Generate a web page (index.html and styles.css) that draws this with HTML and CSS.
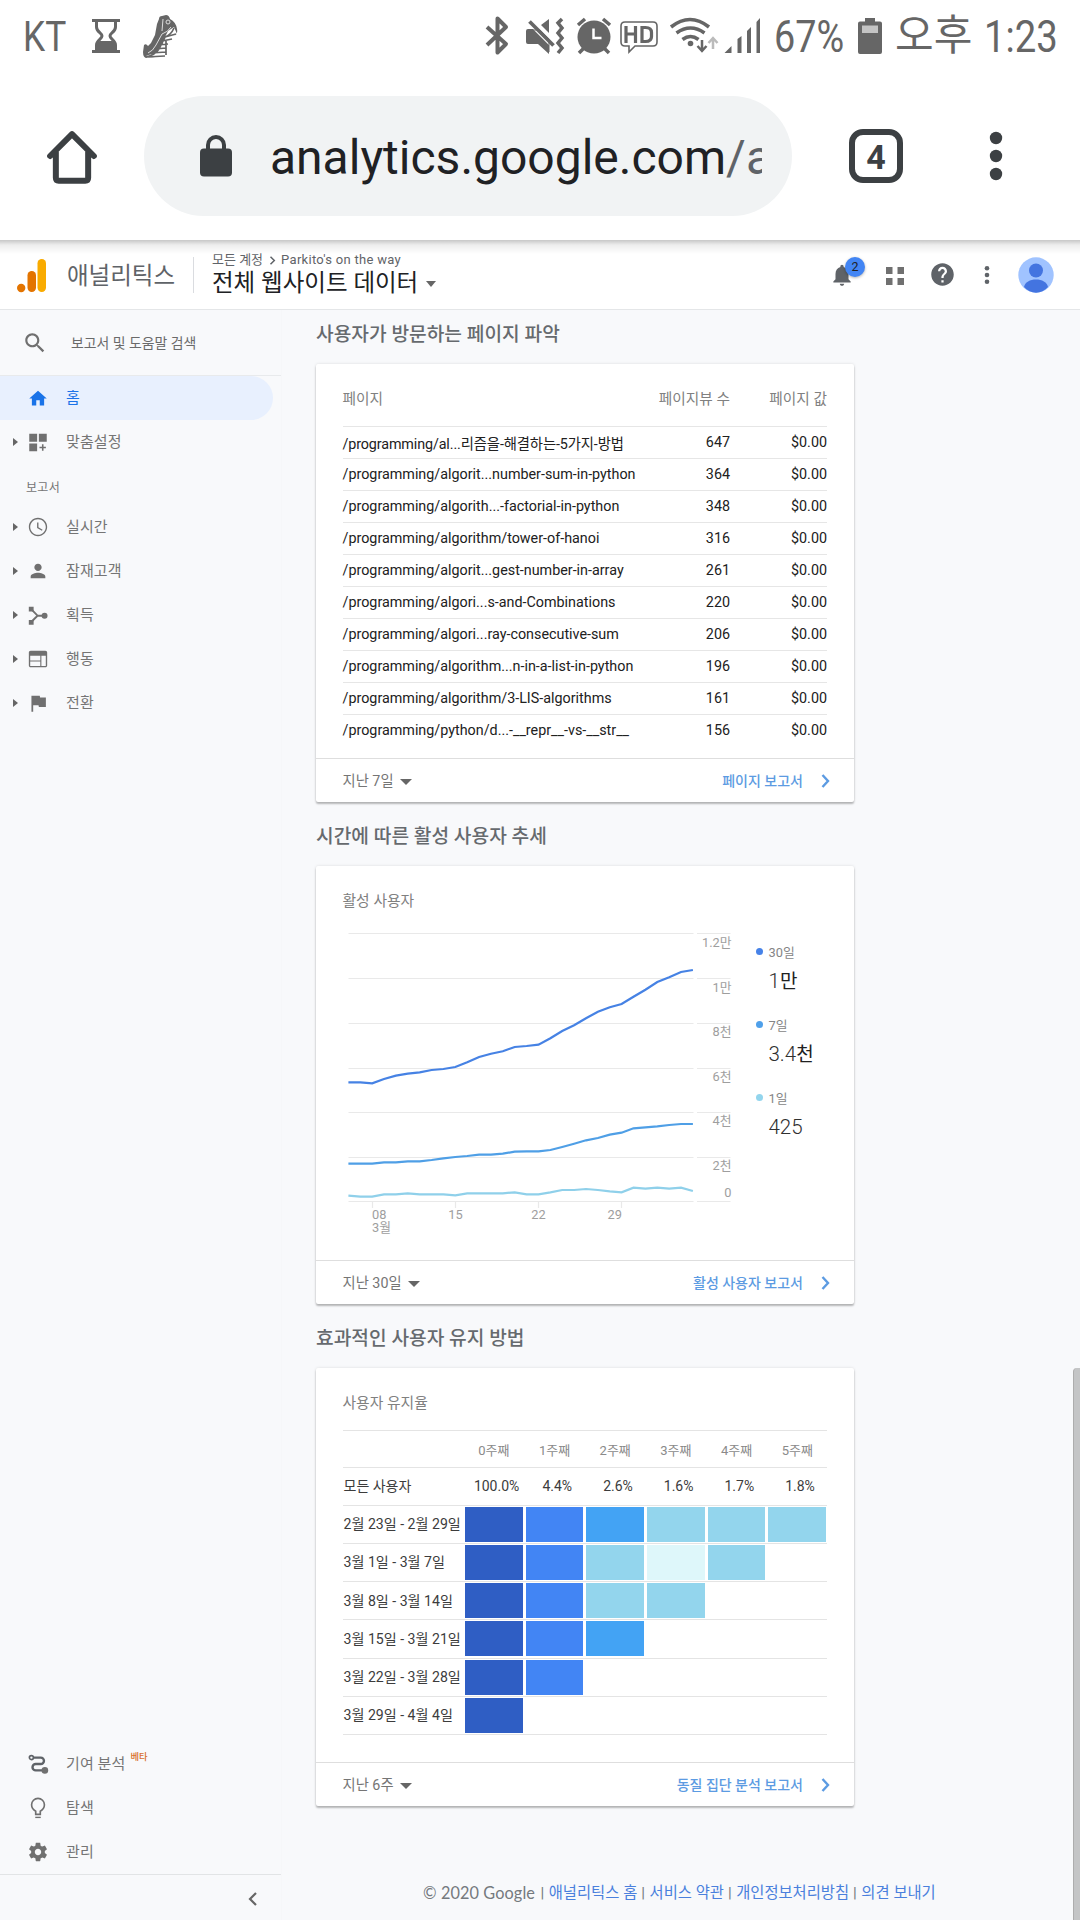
FILE: index.html
```html
<!DOCTYPE html>
<html lang="ko">
<head>
<meta charset="utf-8">
<title>애널리틱스</title>
<link rel="stylesheet" href="styles.css">
</head>
<body>
<div class="status">
  <span class="st-text carrier">KT</span>
  <svg class="st-icon" width="42" height="72" viewBox="85 0 42 72"><path d="M92 19h28v3H92zM92 50h28v3H92z"/><path d="M96.500 22v5c0 5 5.500 6 5.500 9s-5.500 4-5.500 9v5M115.500 22v5c0 5-5.500 6-5.500 9s5.500 4 5.500 9v5" fill="none" stroke="#666" stroke-width="3"/><path d="M96 50v-5q1-3 4-4h12q3 1 4 4v5z"/></svg>
  <svg class="st-icon shoe" width="42" height="72" viewBox="138 0 42 72"><path d="M159 19q0-3 3-3l4-1q3 0 4 4 6 3 7 10 1 4-2 7l-9 5-4 9-7 7-8 1q-4 0-4-6l1-7q2-2 4 1l3-3 4-8 2-11z"/><path d="M174 27l3 7-6 8-5 13-19 3-1-2 11-4 6-11 5-10z" fill="#fff"/><path d="M174 28q-3 7-9 9l-6 12q-4 6-13 8M176 34l-11 3M172 39l-10 2M168 44l-10 1M166 48l-11 1M166 52l-15 1M165 56l-19 1M166 41v14" fill="none" stroke="#666" stroke-width="1.700"/><path d="M171 27q-3 5-9 7l-6 11q-3 6-8 8M163 19l-1 12" fill="none" stroke="#ddd" stroke-width="1"/><circle cx="168" cy="22" r="2" fill="none" stroke="#ddd"/></svg>
  <span class="spacer"></span>
  <svg class="st-icon" width="36" height="72" viewBox="480 0 36 72"><path d="M487 27l19 17-8.500 8.500v-34L506 27l-19 18" fill="none" stroke="#666" stroke-width="4" stroke-linejoin="round"/></svg>
  <svg class="st-icon" width="54" height="72" viewBox="516 0 54 72"><path d="M526 31q0-2 2-2h8l13 13v12l-11-10h-10q-2 0-2-2zM549 19v14l-8-8z"/><path d="M529.500 21.500l25 25" stroke="#fff" stroke-width="6"/><path d="M529.500 21.500l24 24" stroke="#666" stroke-width="3.800"/><path d="M532 30h8l9 9v13" fill="none" stroke="#666" stroke-width="1"/><path d="M562 19l-4 4 4 5-4 5 4 5-4 5 4 5-4 5" fill="none" stroke="#666" stroke-width="3.500"/></svg>
  <svg class="st-icon" width="46" height="72" viewBox="570 0 46 72"><circle cx="594" cy="37" r="16.500"/><path d="M578 25l7-6M610 25l-7-6M584 48l-5 5M604 48l5 5" stroke="#666" stroke-width="3.500"/><path d="M593.500 28.500V38h8" fill="none" stroke="#fff" stroke-width="2.500"/></svg>
  <svg class="st-icon" width="48" height="72" viewBox="616 0 48 72"><path d="M625 22h28q4 0 4 4v16q0 4-4 4h-18l-6 6v-6h-4q-4 0-4-4V26q0-4 4-4z" fill="#fff" stroke="#666" stroke-width="1.600"/><path d="M626 26v17M635.500 26v17M626 34h9.500M642 27.500h3.500q6 0 6 5v4q0 5-6 5H642z" fill="none" stroke="#666" stroke-width="3.200"/></svg>
  <svg class="st-icon" width="56" height="72" viewBox="664 0 56 72"><path d="M671 27q19-15 38 0M676.500 33q14-10 28 0M682.500 39.500q8-6 16 0" fill="none" stroke="#666" stroke-width="3.600"/><circle cx="690.500" cy="43.500" r="2.800"/><path d="M702 40v10M697.500 46l4.500 5 4.500-5" fill="none" stroke="#666" stroke-width="2.500"/><path d="M713 49V39M708.500 43l4.500-5 4.500 5" fill="none" stroke="#bbb" stroke-width="2.500"/></svg>
  <svg class="st-icon" width="50" height="72" viewBox="720 0 50 72"><path d="M724.500 53l7-7v7zM737.500 39l4-3v17h-4zM747 31l4-4v26h-4zM756.500 22l3.500-4v35h-3.500z"/></svg>
  <span class="st-text percent">67%</span>
  <svg class="st-icon" width="36" height="72" viewBox="852 0 36 72"><path d="M865 18h10v3.500h5q2 0 2 2V52q0 2-2 2h-20q-2 0-2-2V23.500q0-2 2-2h5z"/><path d="M862 25.500h16V33h-16z" fill="#c4c4c4"/></svg>
  <span class="st-text ampm">오후</span>
  <span class="st-text clock">1:23</span>
</div>

<div class="toolbar">
  <svg class="tb-home" width="60" height="60" viewBox="0 0 60 60"><path d="M7 30L30 7l23 23M13 26v27q0 3 3 3h28q3 0 3-3V26" transform="translate(1.500 1.500) scale(.95)" fill="none" stroke="#3c4043" stroke-width="6.300" stroke-linecap="round" stroke-linejoin="round"/></svg>
  <div class="omnibox">
    <svg width="32" height="44" viewBox="0 0 32 44"><path d="M8 16v-5a8 8 0 0 1 16 0v5" fill="none" stroke="#3c4043" stroke-width="4"/><rect y="14.500" width="32" height="28" rx="4" fill="#3c4043"/></svg>
    <div class="url">analytics.google.com<span>/a</span></div>
  </div>
  <div class="tabs">4</div>
  <svg class="tb-menu" width="14" height="60" viewBox="0 0 14 60"><g fill="#3c4043"><circle cx="7" cy="12" r="6.200"/><circle cx="7" cy="30" r="6.200"/><circle cx="7" cy="48" r="6.200"/></g></svg>
</div>

<header class="appbar">
  <svg class="logo" width="29" height="34" viewBox="0 0 29 34"><rect x="20.500" width="8.500" height="33" rx="4.200" fill="#f9ab00"/><rect x="10.500" y="12" width="8.500" height="21" rx="4.200" fill="#e37400"/><circle cx="4.200" cy="29" r="4.200" fill="#e37400"/></svg>
  <div class="brand">애널리틱스</div>
  <div class="property">
    <div class="crumbs">모든 계정<svg width="7" height="9" viewBox="0 0 7 9"><path d="M1.500.7l3.800 3.800-3.800 3.800" fill="none" stroke="#5f6368" stroke-width="1.500"/></svg><span>Parkito's on the way</span></div>
    <div class="view">전체 웹사이트 데이터<i class="caret"></i></div>
  </div>
  <div class="actions">
    <div class="bell"><svg width="26" height="26" viewBox="0 0 24 24"><path d="M12 22c1.100 0 2-.9 2-2h-4c0 1.100.89 2 2 2zm6-6v-5c0-3.070-1.640-5.640-4.500-6.320V4c0-.83-.67-1.500-1.500-1.500s-1.500.67-1.500 1.500v.68C7.630 5.360 6 7.920 6 11v5l-2 2v1h16v-1l-2-2z"/></svg><b class="badge">2</b></div>
    <svg class="grid-ic" width="18" height="18" viewBox="0 0 18 18"><path d="M0 0h6.500v7H0zM11.500 0H18v7h-6.500zM0 11h6.500v7H0zM11.500 11H18v7h-6.500z" fill="#707070"/></svg>
    <svg class="help-ic" width="27" height="27" viewBox="0 0 24 24"><path d="M12 2C6.480 2 2 6.480 2 12s4.480 10 10 10 10-4.480 10-10S17.520 2 12 2zm1 17h-2v-2h2v2zm2.070-7.750l-.9.92C13.450 12.900 13 13.500 13 15h-2v-.5c0-1.100.45-2.100 1.170-2.830l1.240-1.260c.37-.36.59-.86.59-1.410 0-1.100-.9-2-2-2s-2 .9-2 2H8c0-2.210 1.790-4 4-4s4 1.790 4 4c0 .88-.36 1.680-.93 2.250z"/></svg>
    <svg class="more-ic" width="6" height="20" viewBox="0 0 6 20"><circle cx="3" cy="3.300" r="2.300"/><circle cx="3" cy="10" r="2.300"/><circle cx="3" cy="16.700" r="2.300"/></svg>
    <svg class="avatar" width="36" height="36" viewBox="0 0 36 36"><circle cx="18" cy="18" r="17.700" fill="#a0c3ff"/><circle cx="18" cy="13.500" r="7" fill="#4374e0"/><path d="M6 30c1-5 6-7.500 12-7.500S29 25 30 30q-5 5.700-12 5.700T6 30z" fill="#4374e0"/></svg>
  </div>
</header>

<div class="layout">
  <nav class="sidebar">
    <div class="search"><svg width="26" height="26" viewBox="0 0 24 24"><path d="M15.500 14h-.79l-.28-.27C15.410 12.590 16 11.110 16 9.500 16 5.910 13.090 3 9.500 3S3 5.910 3 9.500 5.910 16 9.500 16c1.610 0 3.090-.59 4.230-1.570l.27.28v.79l5 4.990L20.490 19l-4.990-5zm-6 0C7.010 14 5 11.990 5 9.500S7.010 5 9.500 5 14 7.010 14 9.500 11.990 14 9.500 14z"/></svg><span>보고서 및 도움말 검색</span></div>
    <a class="item active"><svg width="21" height="21" viewBox="0 0 24 24"><path d="M10 20v-6h4v6h5v-8h3L12 3 2 12h3v8z"/></svg><span>홈</span></a>
    <a class="item sub"><svg width="21" height="21" viewBox="0 0 24 24"><path d="M2 2h9v9H2zM13 2h9v9h-9zM2 13h9v9H2zM16.500 14h1.800v2.800H21v1.800h-2.700V21.500h-1.800v-2.900h-2.800v-1.800h2.800z"/></svg><span>맞춤설정</span></a>
    <div class="section">보고서</div>
    <a class="item sub"><svg width="22" height="22" viewBox="0 0 24 24"><path d="M11.990 2C6.470 2 2 6.480 2 12s4.470 10 9.990 10C17.520 22 22 17.520 22 12S17.520 2 11.990 2zM12 20.500c-4.700 0-8.500-3.800-8.500-8.500S7.300 3.500 12 3.500s8.500 3.800 8.500 8.500-3.800 8.500-8.500 8.500zM12.500 7H11v6l5.250 3.150.75-1.230-4.500-2.670z"/></svg><span>실시간</span></a>
    <a class="item sub"><svg width="22" height="22" viewBox="0 0 24 24"><path d="M12 12c2.210 0 4-1.790 4-4s-1.790-4-4-4-4 1.790-4 4 1.790 4 4 4zm0 2c-2.670 0-8 1.340-8 4v2h16v-2c0-2.660-5.330-4-8-4z"/></svg><span>잠재고객</span></a>
    <a class="item sub"><svg width="21" height="21" viewBox="0 0 24 24"><path d="M1.500 2h5.500v5.500H1.500zM1.500 17h5.500v5.500H1.500z"/><path d="M4.500 5l7 7.200-7 7M11.500 12.200h8" fill="none" stroke="#707070" stroke-width="2.200"/><circle cx="19.500" cy="12.200" r="3.400"/></svg><span>획득</span></a>
    <a class="item sub"><svg width="22" height="22" viewBox="0 0 24 24"><path d="M20 3H4c-1.100 0-2 .9-2 2v14c0 1.100.9 2 2 2h16c1.100 0 2-.9 2-2V5c0-1.100-.9-2-2-2zm-5.500 16.500H3.500v-4.800h11zm0-6H3.500V8.500h11zm6 6h-4.800v-11h4.800z"/></svg><span>행동</span></a>
    <a class="item sub"><svg width="21" height="21" viewBox="0 0 24 24"><path d="M14.400 5L14 3H4.500v18.500h2V14h6.100l.4 2h8V5z"/></svg><span>전환</span></a>
    <div class="fill"></div>
    <a class="item"><svg width="22" height="22" viewBox="0 0 24 24"><g fill="none" stroke="#5f6368"><circle cx="4.800" cy="5" r="2.200" stroke-width="1.800"/><path d="M7 5h8a3.500 3.500 0 0 1 0 7H9.500a3.400 3.400 0 0 0 0 7H19" stroke-width="2.600"/></g><circle cx="19.500" cy="19" r="3.600"/></svg><span>기여 분석</span><sup>베타</sup></a>
    <a class="item"><svg width="22" height="22" viewBox="0 0 24 24"><path d="M9 21.500h6V23H9z"/><path d="M9.500 19v-3.500C7 14 5 12 5 8.500a7 7 0 0 1 14 0c0 3.500-2 5.500-4.500 7V19z" fill="none" stroke="#707070" stroke-width="1.800"/></svg><span>탐색</span></a>
    <a class="item"><svg width="22" height="22" viewBox="0 0 24 24"><path d="M19.430 12.980c.04-.32.07-.64.07-.98s-.03-.66-.07-.98l2.110-1.650c.19-.15.24-.42.12-.64l-2-3.460c-.12-.22-.39-.3-.61-.22l-2.490 1c-.52-.4-1.080-.73-1.690-.98l-.38-2.650C14.460 2.180 14.250 2 14 2h-4c-.25 0-.46.18-.49.42l-.38 2.650c-.61.25-1.170.59-1.690.98l-2.490-1c-.23-.09-.49 0-.61.22l-2 3.460c-.13.22-.07.49.12.64l2.110 1.650c-.04.32-.07.65-.07.98s.03.66.07.98l-2.110 1.650c-.19.15-.24.42-.12.64l2 3.460c.12.22.39.3.61.22l2.490-1c.52.4 1.080.73 1.690.98l.38 2.650c.03.24.24.42.49.42h4c.25 0 .46-.18.49-.42l.38-2.650c.61-.25 1.170-.59 1.690-.98l2.490 1c.23.09.49 0 .61-.22l2-3.460c.12-.22.07-.49-.12-.64l-2.110-1.650zM12 15.500c-1.930 0-3.500-1.570-3.500-3.500s1.570-3.500 3.500-3.500 3.500 1.570 3.500 3.500-1.570 3.500-3.500 3.500z"/></svg><span>관리</span></a>
    <div class="collapse"><svg width="10" height="14" viewBox="0 0 10 14"><path d="M8 1L2 7l6 6" fill="none" stroke="#666" stroke-width="2.200"/></svg></div>
  </nav>

  <main class="content">
    <h2>사용자가 방문하는 페이지 파악</h2>
    <section class="card">
      <div class="body">
        <div class="prow head"><span>페이지</span><span>페이지뷰 수</span><span>페이지 값</span></div>
        <div class="prow"><span class="tight">/programming/al...리즘을-해결하는-5가지-방법</span><span>647</span><span>$0.00</span></div>
        <div class="prow"><span>/programming/algorit...number-sum-in-python</span><span>364</span><span>$0.00</span></div>
        <div class="prow"><span>/programming/algorith...-factorial-in-python</span><span>348</span><span>$0.00</span></div>
        <div class="prow"><span>/programming/algorithm/tower-of-hanoi</span><span>316</span><span>$0.00</span></div>
        <div class="prow"><span>/programming/algorit...gest-number-in-array</span><span>261</span><span>$0.00</span></div>
        <div class="prow"><span>/programming/algori...s-and-Combinations</span><span>220</span><span>$0.00</span></div>
        <div class="prow"><span>/programming/algori...ray-consecutive-sum</span><span>206</span><span>$0.00</span></div>
        <div class="prow"><span>/programming/algorithm...n-in-a-list-in-python</span><span>196</span><span>$0.00</span></div>
        <div class="prow"><span>/programming/algorithm/3-LIS-algorithms</span><span>161</span><span>$0.00</span></div>
        <div class="prow"><span>/programming/python/d...-__repr__-vs-__str__</span><span>156</span><span>$0.00</span></div>
      </div>
      <div class="foot"><span>지난 7일</span><i class="caret"></i><a>페이지 보고서</a><svg width="9" height="14" viewBox="0 0 9 14"><path d="M1.500 1l5.500 6-5.500 6" fill="none" stroke="#5c9be2" stroke-width="2.400"/></svg></div>
    </section>

    <h2>시간에 따른 활성 사용자 추세</h2>
    <section class="card">
      <div class="body">
        <h3>활성 사용자</h3>
        <div class="trend">
          <svg class="plot" width="392" height="310" viewBox="343 928 392 310">
            <path class="gl" d="M348.500 933.500h345M697 933.500h33.500M348.500 978.500h345M697 978.500h33.500M348.500 1023.500h345M697 1023.500h33.500M348.500 1068.500h345M697 1068.500h33.500M348.500 1112.500h345M697 1112.500h33.500M348.500 1157.500h345M697 1157.500h33.500M348.500 1201.500h345M697 1201.500h33.500M372.500 1201.500v6.500M455.500 1201.500v6.500M538.500 1201.500v6.500M621.500 1201.500v6.500"/>
            <polyline stroke="#4682e4" points="348.400,1082.300 360.300,1082.300 372.200,1083.300 384,1079 395.900,1075.700 407.800,1073.700 419.700,1072.300 431.600,1070 443.400,1069 455.300,1067 467.200,1062.300 479.100,1057 491,1053.700 502.800,1051.300 514.700,1047 526.600,1046 538.500,1044.700 550.400,1038.300 562.200,1031 574.100,1025.300 586,1018.300 597.900,1011.700 609.800,1007.300 621.600,1004 633.500,996.700 645.400,989.700 657.300,982 669.200,977.300 681,972 692.900,970"/>
            <polyline stroke="#4f9fe6" points="348.400,1163.700 360.300,1163.700 372.200,1163.700 384,1162.300 395.900,1162.300 407.800,1161.300 419.700,1161.300 431.600,1160 443.400,1158.300 455.300,1157 467.200,1156 479.100,1154.700 491,1154.700 502.800,1153.700 514.700,1151.700 526.600,1151.300 538.500,1151.300 550.400,1150 562.200,1147 574.100,1143.700 586,1140.300 597.900,1138 609.800,1134.700 621.600,1132.700 633.500,1128.300 645.400,1127.300 657.300,1126.300 669.200,1125 681,1124 692.900,1124"/>
            <polyline stroke="#8fd0ea" points="348.400,1195.700 360.300,1196.700 372.200,1196.700 384,1194.300 395.900,1194.300 407.800,1193.300 419.700,1194.300 431.600,1194.300 443.400,1194.300 455.300,1195.300 467.200,1193.300 479.100,1193.300 491,1193.300 502.800,1193.300 514.700,1192.300 526.600,1194.300 538.500,1194.300 550.400,1192.300 562.200,1190 574.100,1190 586,1189 597.900,1190 609.800,1191.300 621.600,1192.300 633.500,1187.700 645.400,1188.700 657.300,1187.700 669.200,1188.700 681,1187.700 692.900,1191"/>
            <g text-anchor="end"><text x="731.500" y="947.300">1.2만</text><text x="731.500" y="992">1만</text><text x="731.500" y="1036">8천</text><text x="731.500" y="1081">6천</text><text x="731.500" y="1125">4천</text><text x="731.500" y="1170">2천</text><text x="731.500" y="1197">0</text><text x="622" y="1219">29</text></g>
            <text x="372" y="1219">08</text><text x="372" y="1232">3월</text>
            <g text-anchor="middle"><text x="455.500" y="1219">15</text><text x="538.500" y="1219">22</text></g>
          </svg>
          <dl class="legend">
            <dt><i class="d30"></i>30일</dt><dd>1<b>만</b></dd>
            <dt><i class="d7"></i>7일</dt><dd>3.4<b>천</b></dd>
            <dt><i class="d1"></i>1일</dt><dd>425</dd>
          </dl>
        </div>
      </div>
      <div class="foot"><span>지난 30일</span><i class="caret"></i><a>활성 사용자 보고서</a><svg width="9" height="14" viewBox="0 0 9 14"><path d="M1.500 1l5.500 6-5.500 6" fill="none" stroke="#5c9be2" stroke-width="2.400"/></svg></div>
    </section>

    <h2>효과적인 사용자 유지 방법</h2>
    <section class="card">
      <div class="body">
        <h3>사용자 유지율</h3>
        <div class="cohort">
          <div class="crow weeks"><span></span><span>0주째</span><span>1주째</span><span>2주째</span><span>3주째</span><span>4주째</span><span>5주째</span></div>
          <div class="crow totals"><span>모든 사용자</span><span>100.0%</span><span>4.4%</span><span>2.6%</span><span>1.6%</span><span>1.7%</span><span>1.8%</span></div>
          <div class="crow"><span>2월 23일 - 2월 29일</span><i class="c5"></i><i class="c4"></i><i class="c3"></i><i class="c2"></i><i class="c2"></i><i class="c2"></i></div>
          <div class="crow"><span>3월 1일 - 3월 7일</span><i class="c5"></i><i class="c4"></i><i class="c2"></i><i class="c1"></i><i class="c2"></i></div>
          <div class="crow"><span>3월 8일 - 3월 14일</span><i class="c5"></i><i class="c4"></i><i class="c2"></i><i class="c2"></i></div>
          <div class="crow"><span>3월 15일 - 3월 21일</span><i class="c5"></i><i class="c4"></i><i class="c3"></i></div>
          <div class="crow"><span>3월 22일 - 3월 28일</span><i class="c5"></i><i class="c4"></i></div>
          <div class="crow"><span>3월 29일 - 4월 4일</span><i class="c5"></i></div>
        </div>
      </div>
      <div class="foot"><span>지난 6주</span><i class="caret"></i><a>동질 집단 분석 보고서</a><svg width="9" height="14" viewBox="0 0 9 14"><path d="M1.500 1l5.500 6-5.500 6" fill="none" stroke="#5c9be2" stroke-width="2.400"/></svg></div>
    </section>

    <footer class="site"><span class="copy">© 2020 Google</span><em>|</em><a>애널리틱스 홈</a><em>|</em><a>서비스 약관</a><em>|</em><a>개인정보처리방침</a><em>|</em><a>의견 보내기</a></footer>
  </main>
  <div class="scroll"></div>
</div>
</body>
</html>
```
FILE: styles.css
```css
* { box-sizing: border-box; margin: 0; padding: 0; }
body { width: 1080px; height: 1920px; overflow: hidden; display: flex; flex-direction: column; background: #f8f9fb; color: #5f6368; font-family: Roboto, "Noto Sans CJK KR", sans-serif; }
svg { display: block; flex: none; fill: #5f6368; }
i, em { font-style: normal; }

/* phone status bar */
.status { flex: none; height: 72px; display: flex; align-items: center; padding-right: 3px; background: #fff; color: #666; }
.st-icon { fill: #666; }
.shoe { margin-left: 11px; }
.spacer { flex: 1; }
.st-text { flex: none; font-size: 45px; line-height: 72px; white-space: nowrap; transform-origin: 0 50%; }
.carrier { width: 62px; margin-left: 23px; padding-top: 1px; font-size: 42px; transform: scaleX(.84); }
.percent { width: 78px; margin-left: 4px; padding-top: 1px; transform: scaleX(.84); }
.ampm { width: 96px; margin-left: 7px; font-size: 42px; }
.clock { width: 93px; margin-left: -7px; padding-top: 1px; transform: scaleX(.85); }

/* browser toolbar */
.toolbar { flex: none; height: 168px; display: flex; align-items: center; background: #fff; }
.tb-home { margin: 0 42px; }
.omnibox { width: 648px; height: 120px; border-radius: 60px; background: #f1f3f4; display: flex; align-items: center; padding-left: 56px; }
.url { width: 492px; margin-left: 38px; padding-top: 3px; font-size: 48px; line-height: 117px; white-space: nowrap; overflow: hidden; color: #202124; }
.url span { color: #5f6368; }
.tabs { width: 54px; height: 54px; margin-left: 57px; border: 6px solid #3c4043; border-radius: 14px; font-size: 34px; line-height: 44px; font-weight: 700; text-align: center; color: #3c4043; }
.tb-menu { margin-left: 86px; }

/* application header */
.appbar { flex: none; height: 70px; display: flex; align-items: center; padding: 0 26px 0 17px; background: #fff linear-gradient(rgba(0, 0, 0, .22), rgba(0, 0, 0, .07) 5px, rgba(0, 0, 0, 0) 14px) no-repeat; border-bottom: 1px solid #e4e6e8; }
.logo { margin-top: 2px; }
.brand { width: 126px; margin: 2px 0 0 21px; font-size: 23.500px; line-height: 30px; white-space: nowrap; }
.property { padding-left: 18px; border-left: 1px solid #dadce0; height: 36px; display: flex; flex-direction: column; justify-content: center; }
.crumbs { display: flex; align-items: center; font-size: 13px; line-height: 15px; margin-top: 0; }
.crumbs svg { margin: 1px 5px 0 6px; }
.crumbs span { letter-spacing: .3px; }
.view { display: flex; align-items: center; margin-top: 2px; font-size: 23.500px; line-height: 28px; color: #202124; white-space: nowrap; }
.caret { flex: none; border: 6px solid transparent; border-top: 6px solid #666; border-bottom: 0; }
.view .caret { margin: 2px 0 0 8px; border-width: 6px 5px 0; }
.actions { margin-left: auto; display: flex; align-items: center; }
.bell { position: relative; margin-right: 31px; }
.badge { position: absolute; left: 16px; top: -5px; width: 20px; height: 20px; border-radius: 50%; background: #4285f4; color: #202124; font-size: 12.500px; font-weight: 400; line-height: 20px; text-align: center; box-shadow: 0 1px 3px rgba(0, 0, 0, .3); }
.grid-ic { margin-top: 2px; }
.help-ic { margin-left: 25px; }
.more-ic { margin-left: 28px; }
.avatar { margin-left: 28px; }

.layout { flex: 1; display: flex; min-height: 0; }

/* navigation */
.sidebar { flex: none; width: 282px; display: flex; flex-direction: column; border-right: 1px solid #f6f7f9; color: #757575; font-size: 15px; }
.sidebar svg { fill: #707070; }
.search { height: 66px; display: flex; align-items: center; padding-left: 22px; border-bottom: 1px solid #e8eaec; font-size: 13.900px; color: #6a6a6a; }
.search span { margin: -2px 0 0 23px; }
.item { height: 44px; display: flex; align-items: center; padding-left: 27px; }
.item svg { margin-right: 17px; width: 22px; }
.item span { margin-top: -3px; letter-spacing: .1px; }
.item.active { width: 273px; border-radius: 0 22px 22px 0; background: #e8f0fe; color: #1a73e8; }
.item.active svg { fill: #1a73e8; }
.item.sub { padding-left: 13px; }
.item.sub::before { content: ""; width: 0; margin-right: 9px; border: 4px solid transparent; border-left: 5px solid #666; border-right: 0; }
.section { height: 41px; line-height: 48px; padding-left: 26px; font-size: 12px; letter-spacing: .3px; }
.fill { flex: 1; }
sup { margin: -15px 0 0 5px; color: #d9722e; font-size: 9.300px; font-weight: 500; line-height: 12px; }
.collapse { height: 46px; border-top: 1px solid #e2e4e6; display: flex; align-items: center; padding: 2px 0 0 248px; }

/* report cards */
.content { flex: 1; padding-left: 34px; }
h2 { height: 64px; padding-top: 21px; font-size: 19.200px; line-height: 28px; font-weight: 500; color: #666a6e; white-space: nowrap; }
h2:first-child { height: 54px; padding-top: 11px; }
.card { width: 538px; height: 438px; display: flex; flex-direction: column; background: #fff; border-radius: 2px; box-shadow: 0 2px 2px rgba(0, 0, 0, .25), 0 0 3px rgba(0, 0, 0, .12); }
.body { flex: 1; padding: 0 27px 0 26.500px; }
h3 { height: 62px; padding-top: 24px; font-size: 14.800px; line-height: 23px; font-weight: 400; color: #808080; }
.prow { height: 32px; display: flex; align-items: center; border-top: 1px solid #e6e6e6; font-size: 14.340px; color: #212121; white-space: nowrap; }
.prow span:first-child { flex: 1; }
.prow span:nth-child(2) { width: 90px; text-align: right; }
.prow span:nth-child(3) { width: 97px; text-align: right; }
.prow span.tight { letter-spacing: -.12px; }
.prow:last-child { height: 31px; }
.prow.head { height: 62px; padding-top: 5px; border: 0; color: #808080; font-size: 14.700px; }
.foot { flex: none; height: 44px; display: flex; align-items: center; padding: 0 24px 2px 26.500px; border-top: 1px solid #dedede; font-size: 14.300px; color: #757575; }
.foot .caret { margin: 4px 0 0 6px; }
.foot a { margin: 1px 18px 0 auto; color: #5c9be2; font-weight: 500; font-size: 14px; }
.foot svg { margin-top: 2px; }

/* active users */
.trend { display: flex; }
.plot text { font-size: 12.800px; fill: #9e9e9e; }
.plot .gl { stroke: #e9e9e9; fill: none; stroke-width: 1.200; }
.plot polyline { fill: none; stroke-width: 2.200; }
.legend { padding: 11px 0 0 21.500px; white-space: nowrap; }
.legend dt { height: 24px; display: flex; align-items: center; font-size: 12.800px; color: #858585; }
.legend dt i { width: 7px; height: 7px; margin-right: 5.500px; border-radius: 50%; }
.legend dd { height: 49px; padding-left: 12.500px; font-size: 20.500px; line-height: 37px; font-weight: 300; color: #303030; }
.legend dd b { font-size: 19px; font-weight: 400; color: #212121; }
.d30 { background: #4682e8; }
.d7 { background: #4fa0ea; }
.d1 { background: #93d5ed; }

/* cohort table */
.crow { height: 38.250px; display: grid; grid-template-columns: 119.500px repeat(6, 57.700px); column-gap: 3px; align-items: center; border-top: 1px solid #e4e4e4; font-size: 14.100px; color: #3c3c3c; white-space: nowrap; }
.crow span:first-child { padding-left: 1px; margin-top: -2px; }
.crow i { height: 35px; }
.crow:last-child { height: 39.250px; border-bottom: 1px solid #e4e4e4; }
.crow.weeks { height: 37px; font-size: 13px; color: #8a8a8a; }
.crow.totals { height: 37.500px; font-size: 14px; }
.weeks span, .totals span { text-align: center; }
.crow.totals span:first-child { text-align: left; }
.totals span + span { padding-left: 5.500px; }
.c5 { background: #2f5ec4; }
.c4 { background: #4285f4; }
.c3 { background: #43a3f4; }
.c2 { background: #93d5ed; }
.c1 { background: #def7fa; }

.site { display: flex; margin: 75px 0 0 107px; font-size: 15.350px; line-height: 24px; color: #757a7e; white-space: nowrap; }
.site .copy { width: 113.500px; font-family: Lato, sans-serif; font-size: 16.300px; letter-spacing: .1px; }
.site em { margin: 0 4.500px 0 4px; }
.site a { color: #4a80dd; }

.scroll { align-self: flex-end; width: 7px; height: 552px; border-radius: 4px 0 0 0; background: #c4c5c6; border-left: 1px solid #adadad; }
```
